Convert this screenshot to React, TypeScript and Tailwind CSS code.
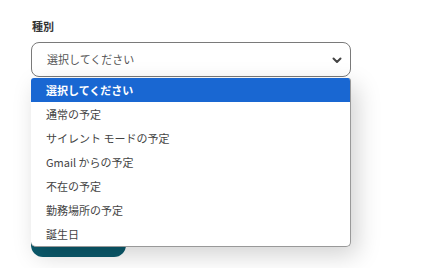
const options = [
  "選択してください",
  "通常の予定",
  "サイレント モードの予定",
  "Gmail からの予定",
  "不在の予定",
  "勤務場所の予定",
  "誕生日",
];

export default function App() {
  return (
    <div
      className="w-[442px] h-[268px] bg-white overflow-hidden"
      style={{ fontFamily: '"Noto Sans CJK JP", "Noto Sans", sans-serif' }}
    >
      <div className="pl-[31px] pt-[17px] w-[351px]">
        <div className="pl-[1px] text-[11px] font-bold text-[#333] leading-[18px]">種別</div>
        <div className="relative mt-[7px]">
          <div className="h-[35px] w-[320px] rounded-[8px] border border-[#7a7a7a] flex items-center pl-[15px] pr-[8px] justify-between">
            <span className="text-[11px] text-[#555]">選択してください</span>
            <svg width="12" height="12" viewBox="0 0 12 12" className="mr-[-1px]">
              <path d="M2.5 4.5 L6 8 L9.5 4.5" fill="none" stroke="#444" strokeWidth="2" strokeLinecap="round" strokeLinejoin="round" />
            </svg>
          </div>
          <div className="absolute left-0 top-[36px] z-10 w-[320px] bg-white rounded-[5px] rounded-t-[3px] border border-[#999] border-t-0 border-l-0 shadow-[6px_8px_24px_rgba(0,0,0,0.18)] overflow-hidden">
            {options.map((o, i) => (
              <div
                key={o}
                className={
                  i === 0
                    ? "h-[24px] pl-[15px] flex items-center text-[11px] font-bold text-white bg-[#1967d2]"
                    : "h-[24px] pl-[15px] flex items-center text-[11px] text-[#444]"
                }
              >
                {o}
              </div>
            ))}
          </div>
        </div>
        <button className="mt-[144px] h-[36px] w-[95px] rounded-[12px] bg-[#0b5a6c] text-white text-[12px] font-bold">
          保存する
        </button>
      </div>
    </div>
  );
}
